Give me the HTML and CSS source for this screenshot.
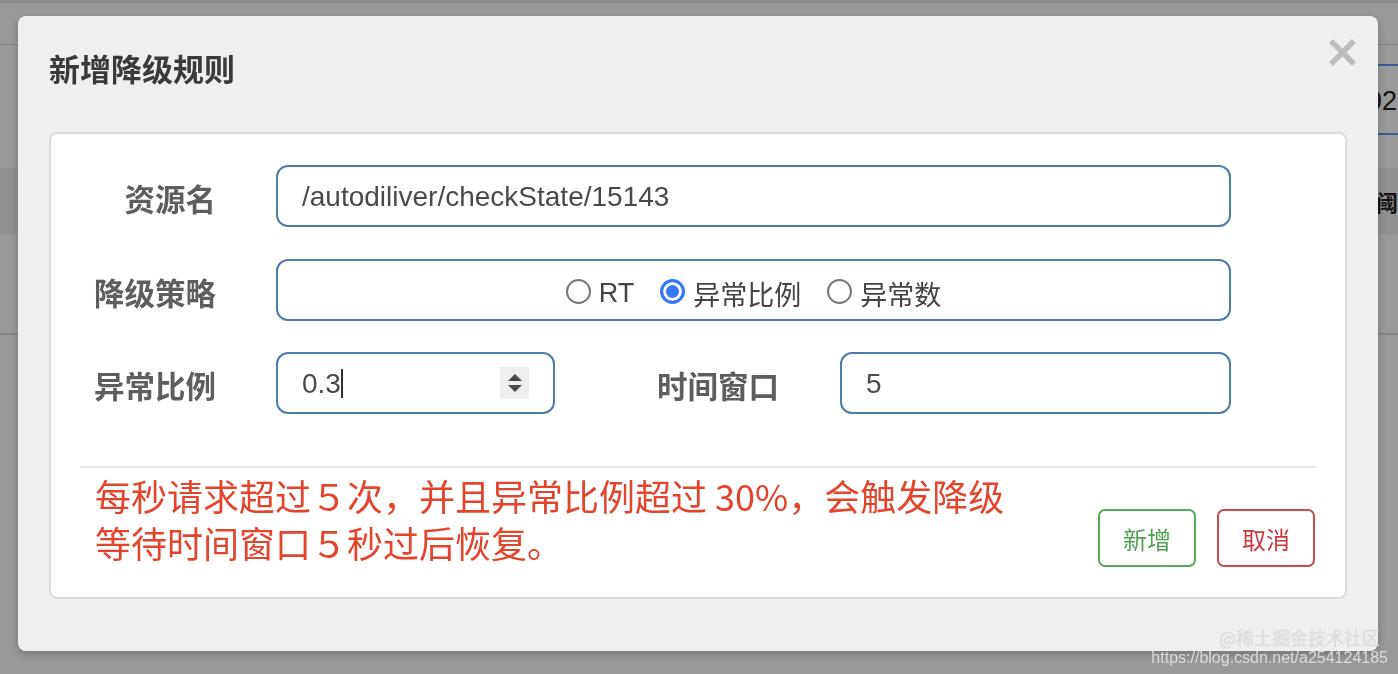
FILE: index.html
```html
<!DOCTYPE html>
<html lang="zh-CN">
<head>
<meta charset="utf-8">
<title>新增降级规则</title>
<link rel="stylesheet" href="styles.css">
</head>
<body>
<div class="page">
  <div class="page-top"></div>
  <div class="toolbar">
    <div class="search-box"><span class="search-text">0.92</span></div>
  </div>
  <div class="thead"><span class="th-text">阈值</span></div>
  <div class="trow"></div>
</div>

<div class="backdrop"></div>

<div class="modal">
  <button class="close" type="button" aria-label="关闭">
    <svg width="29" height="29" viewBox="0 0 29 29"><path d="M3 3 L26 26 M26 3 L3 26" stroke="#bdbdbd" stroke-width="5.5" fill="none"/></svg>
  </button>
  <div class="modal-header">
    <h4 class="modal-title">新增降级规则</h4>
  </div>
  <div class="panel">
    <div class="form-row row-1">
      <label class="label">资源名</label>
      <div class="field field-full"><span class="value">/autodiliver/checkState/15143</span></div>
    </div>
    <div class="form-row row-2">
      <label class="label">降级策略</label>
      <div class="field field-full field-radios">
        <label class="radio"><input type="radio" name="grade"><span>RT</span></label>
        <label class="radio"><input type="radio" name="grade" checked><span>异常比例</span></label>
        <label class="radio"><input type="radio" name="grade"><span>异常数</span></label>
      </div>
    </div>
    <div class="form-row row-3">
      <label class="label">异常比例</label>
      <div class="field field-small">
        <span class="value">0.3</span><span class="caret"></span>
        <span class="spinner"><span class="tri-up"></span><span class="tri-down"></span></span>
      </div>
      <label class="label label-second">时间窗口</label>
      <div class="field field-window"><span class="value">5</span></div>
    </div>
    <div class="divider"></div>
    <div class="footer">
      <p class="hint">每秒请求超过５次，并且异常比例超过 30%，会触发降级<br>等待时间窗口５秒过后恢复。</p>
      <div class="buttons">
        <button class="btn btn-add" type="button">新增</button>
        <button class="btn btn-cancel" type="button">取消</button>
      </div>
    </div>
  </div>
</div>

<div class="watermark">
  <div class="wm-juejin">@稀土掘金技术社区</div>
  <div class="wm-csdn">https://blog.csdn.net/a254124185</div>
</div>
</body>
</html>
```

FILE: styles.css
```css
* { box-sizing: border-box; }

html, body {
  margin: 0;
  padding: 0;
  height: 100%;
  overflow: hidden;
}

body {
  background: #fff;
  font-family: "Liberation Sans", "Noto Sans CJK SC", sans-serif;
  color: #333;
}

/* background page (dimmed) */
.page-top {
  height: 45px;
  border-top: 3px solid #e9e9e9;
  border-bottom: 1px solid #d9d9d9;
}

.toolbar {
  height: 123px;
  display: flex;
  justify-content: flex-end;
  padding-top: 19px;
}

.search-box {
  width: 400px;
  height: 71px;
  border-top: 2px solid #6196e6;
  border-bottom: 2px solid #6196e6;
  display: flex;
  align-items: center;
  justify-content: flex-end;
  padding-right: 1px;
  padding-top: 3px;
  font-size: 27px;
  color: #222;
}

.thead {
  height: 66px;
  background: #f0f0f0;
  display: flex;
  align-items: center;
  justify-content: flex-end;
  font-weight: bold;
  font-size: 22px;
  color: #222;
}

.th-text { margin-right: -22px; }

.trow {
  height: 101px;
  border-bottom: 2px solid #dcdcdc;
}

.backdrop {
  position: fixed;
  inset: 0;
  background: rgba(0, 0, 0, 0.4);
}

/* modal */
.modal {
  position: fixed;
  left: 18px;
  top: 16px;
  width: 1360px;
  height: 635px;
  background: #efefef;
  border-radius: 8px;
  padding: 0 31px;
  box-shadow: 0 3px 9px rgba(0, 0, 0, 0.25);
}

.close {
  position: absolute;
  right: 21px;
  top: 22px;
  width: 29px;
  height: 29px;
  padding: 0;
  border: 0;
  background: none;
  display: flex;
}

.modal-header {
  padding-top: 33px;
  height: 116px;
}

.modal-title {
  margin: 0;
  font-family: "Noto Sans CJK SC", sans-serif;
  font-size: 31px;
  line-height: 38px;
  font-weight: bold;
  color: #3a3a3a;
}

.panel {
  height: 467px;
  background: #fff;
  border: 2px solid #dcdcdc;
  border-radius: 8px;
  padding-top: 31px;
}

.form-row {
  display: flex;
  align-items: center;
  height: 62px;
}

.row-1 { margin-bottom: 32px; }
.row-2 { margin-bottom: 31px; }

.label {
  width: 165px;
  text-align: right;
  font-family: "Noto Sans CJK SC", sans-serif;
  font-size: 30.5px;
  font-weight: bold;
  color: #5e5e5e;
  margin-right: 60px;
  line-height: 40px;
  padding-top: 4px;
}

.label-second {
  width: 224px;
  margin-right: 61px;
}

.field {
  height: 62px;
  border: 2px solid #4f7bab;
  border-radius: 12px;
  background: #fff;
  display: flex;
  align-items: center;
  padding-left: 24px;
  font-size: 28px;
  color: #4a4a4a;
}

.field-full { width: 955px; }
.field-small { width: 279px; padding-right: 24px; }
.field-window { width: 391px; }

.value { line-height: 32px; padding-top: 2px; }

.caret {
  width: 2px;
  height: 29px;
  background: #333;
}

.spinner {
  margin-left: auto;
  width: 29px;
  height: 32px;
  background: #eeeeee;
  display: flex;
  flex-direction: column;
  align-items: center;
  justify-content: center;
  gap: 4px;
}

.tri-up {
  width: 0;
  height: 0;
  border-left: 7px solid transparent;
  border-right: 7px solid transparent;
  border-bottom: 7px solid #4a4a4a;
}

.tri-down {
  width: 0;
  height: 0;
  border-left: 7px solid transparent;
  border-right: 7px solid transparent;
  border-top: 7px solid #4a4a4a;
}

.field-radios {
  justify-content: center;
  padding-left: 0;
  gap: 26px;
  padding-top: 6px;
}

.radio {
  display: flex;
  align-items: center;
  gap: 8px;
  font-family: "Liberation Sans", "Noto Sans CJK SC", sans-serif;
  font-size: 27px;
  color: #444;
}

.radio input {
  appearance: none;
  -webkit-appearance: none;
  margin: 0 0 3px;
  width: 25px;
  height: 25px;
  border: 2px solid #777;
  border-radius: 50%;
  background: #fff;
}

.radio input:checked {
  border: 3px solid #3478f6;
  background: #3478f6;
  box-shadow: inset 0 0 0 3px #fff;
}

.divider {
  margin: 52px 29px 0;
  height: 2px;
  background: #e5e5e5;
}

.footer {
  display: flex;
  align-items: flex-end;
  justify-content: space-between;
  padding: 0 30px 0 44px;
}

.hint {
  margin: 4px 0 0;
  font-family: "Noto Sans CJK SC", sans-serif;
  font-size: 36px;
  line-height: 47px;
  color: #e2452c;
}

.buttons {
  display: flex;
  gap: 21px;
  margin-bottom: -1px;
}

.btn {
  width: 98px;
  height: 58px;
  background: #fff;
  border-radius: 7px;
  border: 2px solid;
  font-family: "Noto Sans CJK SC", sans-serif;
  font-size: 24px;
  padding: 0;
}

.btn-add {
  border-color: #5aa95a;
  color: #4fa34f;
}

.btn-cancel {
  border-color: #cc4950;
  color: #c9393f;
}

/* watermark */
.watermark {
  position: fixed;
  right: 10px;
  bottom: 8px;
  text-align: right;
  color: rgba(225, 225, 225, 0.9);
  text-shadow: 0 0 1px rgba(150, 150, 150, 0.4);
}

.wm-juejin {
  font-family: "Noto Sans CJK SC", sans-serif;
  font-size: 18px;
  line-height: 22px;
  margin-right: 8px;
  margin-bottom: 2px;
}

.wm-csdn {
  font-family: "Liberation Sans", sans-serif;
  font-size: 16px;
  line-height: 16px;
}
```
